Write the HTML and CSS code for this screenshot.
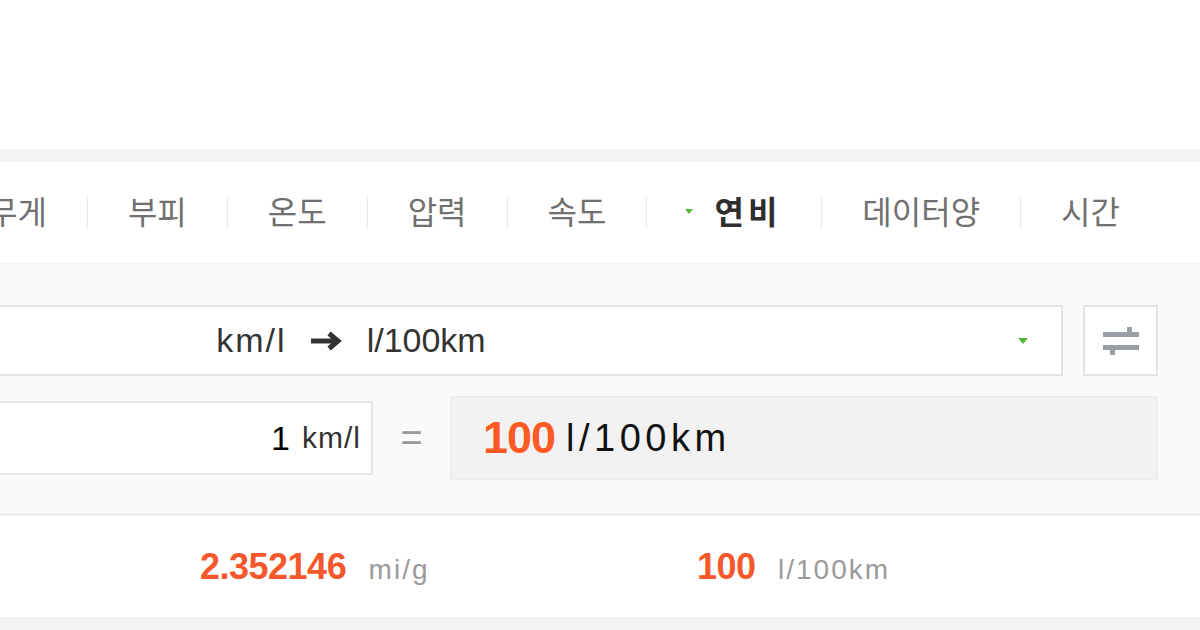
FILE: index.html
```html
<!DOCTYPE html>
<html lang="ko">
<head>
  <meta charset="UTF-8" />
  <meta name="viewport" content="width=device-width, initial-scale=1.0"/>
  <title>단위 변환 - 연비</title>
  <link rel="stylesheet" href="styles.css">
</head>
<body>
  <div class="top-space"></div>
  <div class="band"></div>

  <ul class="tabs">
    <li>무게</li>
    <li>부피</li>
    <li>온도</li>
    <li>압력</li>
    <li>속도</li>
    <li class="active"><i class="tab-mark"></i>연비</li>
    <li>데이터양</li>
    <li>시간</li>
  </ul>

  <section class="panel">
    <div class="converter">
      <div class="unit-row">
        <div class="unit-select">
          <span></span>
          <div class="unit-pair">
            <span>km/l</span>
            <svg class="arrow" width="34" height="22" viewBox="0 0 34 22">
              <path d="M1 11H27" stroke="#333" stroke-width="5"/>
              <path d="M19 3.5l9 7.5-9 7.5" fill="none" stroke="#333" stroke-width="5"/>
            </svg>
            <span>l/100km</span>
          </div>
          <i class="caret"></i>
        </div>
        <button class="swap">
          <svg width="36" height="30" viewBox="0 0 36 30">
            <rect x="0" y="6" width="36" height="5" fill="#9a9ea5"/>
            <rect x="24" y="1" width="5" height="6" fill="#9a9ea5"/>
            <rect x="0" y="19" width="36" height="5" fill="#9a9ea5"/>
            <rect x="7" y="23" width="5" height="6" fill="#9a9ea5"/>
          </svg>
        </button>
      </div>

      <div class="value-row">
        <div class="value-input">
          <span class="num">1</span>
          <span class="unit">km/l</span>
        </div>
        <span class="equals">=</span>
        <div class="value-result">
          <span class="res-num">100</span>
          <span class="res-unit">l/100km</span>
        </div>
      </div>
    </div>
  </section>

  <div class="results">
    <div class="result-item">
      <span class="r-num">2.352146</span>
      <span class="r-unit">mi/g</span>
    </div>
    <div class="result-item">
      <span class="r-num">100</span>
      <span class="r-unit">l/100km</span>
    </div>
  </div>

  <div class="band bottom"></div>
</body>
</html>
```

FILE: styles.css
```css
body {
  margin: 0;
  width: 1200px;
  overflow: hidden;
  background: #ffffff;
  font-family: "Liberation Sans", "Noto Sans CJK KR", sans-serif;
  color: #333;
}

.top-space {
  height: 149px;
}

.band {
  height: 13px;
  background: #f3f3f4;
}

.tabs {
  list-style: none;
  margin: 0;
  padding: 0;
  height: 101px;
  display: flex;
  align-items: center;
  border-bottom: 1px solid #efefef;
  font-family: "Noto Sans CJK KR", sans-serif;
  font-size: 32px;
  color: #707070;
  white-space: nowrap;
}

.tabs li {
  padding: 0 40px;
  height: 32px;
  line-height: 26px;
  display: flex;
  align-items: flex-start;
}

.tabs li:first-child {
  margin-left: -52px;
}

.tabs li + li {
  border-left: 1px solid #e8e8e8;
}

.tabs li.active {
  color: #2e2e2e;
  font-weight: bold;
  letter-spacing: 4px;
}

.tab-mark {
  display: inline-block;
  width: 0;
  height: 0;
  border-left: 4px solid transparent;
  border-right: 4px solid transparent;
  border-top: 5px solid #56b83f;
  margin: 12px 21px 0 -2px;
}

.panel {
  background: #fafafa;
  padding: 41px 0 33px;
}

.converter {
  margin-left: -361px;
  width: 1519px;
}

.unit-row {
  display: flex;
  gap: 20px;
  height: 71px;
}

.unit-select {
  flex: 1;
  display: grid;
  grid-template-columns: 1fr auto 1fr;
  align-items: center;
  background: #fff;
  border: 2px solid #e3e3e3;
  box-sizing: border-box;
}

.unit-pair {
  display: flex;
  align-items: center;
  gap: 23px;
  font-size: 34px;
  color: #333;
}

.unit-pair span:first-child {
  letter-spacing: 2px;
}

.caret {
  justify-self: end;
  margin-right: 33px;
  width: 0;
  height: 0;
  border-left: 5px solid transparent;
  border-right: 5px solid transparent;
  border-top: 6px solid #56b83f;
}

.swap {
  width: 75px;
  height: 71px;
  padding: 0;
  background: #fff;
  border: 2px solid #e3e3e3;
  display: flex;
  align-items: center;
  justify-content: center;
  cursor: pointer;
}

.value-row {
  display: flex;
  align-items: center;
  margin-top: 20px;
  height: 84px;
}

.value-input {
  width: 734px;
  height: 74px;
  box-sizing: border-box;
  background: #fff;
  border: 2px solid #e6e6e6;
  display: flex;
  align-items: center;
  justify-content: flex-end;
  padding-right: 10px;
  color: #000;
}

.value-input .num {
  font-size: 34px;
}

.value-input .unit {
  font-size: 30px;
  color: #333;
  letter-spacing: 1px;
  margin-left: 12px;
}

.equals {
  width: 77px;
  text-align: center;
  font-size: 38px;
  color: #9a9a9a;
}

.value-result {
  flex: 1;
  height: 84px;
  box-sizing: border-box;
  background: #f2f2f2;
  border: 1px solid #ebebeb;
  display: flex;
  align-items: center;
  padding-left: 32px;
}

.res-num {
  font-size: 45px;
  font-weight: bold;
  color: #ff5a23;
  letter-spacing: -1px;
}

.res-unit {
  font-size: 38px;
  color: #111;
  letter-spacing: 4.5px;
  margin-left: 11px;
}

.results {
  border-top: 3px solid #eeeeee;
  height: 101px;
  display: flex;
  align-items: center;
  padding-left: 200px;
  white-space: nowrap;
}

.result-item {
  width: 497px;
}

.r-num {
  font-size: 36px;
  font-weight: bold;
  color: #f7582b;
  letter-spacing: -0.5px;
}

.r-unit {
  font-size: 28px;
  color: #9a9a9a;
  letter-spacing: 2px;
  margin-left: 18px;
}

.band.bottom {
  height: 20px;
}
```
